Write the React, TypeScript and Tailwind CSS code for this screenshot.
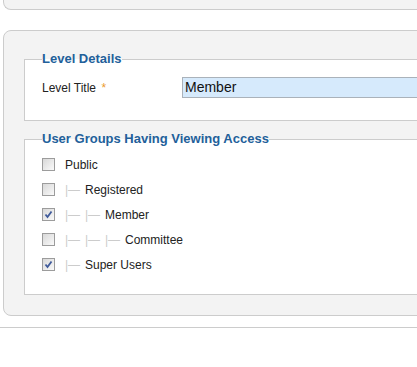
import React from "react";

function Box({ checked }: { checked?: boolean }) {
  return (
    <span className="relative inline-block w-[13px] h-[13px] border border-[#9c9c9c] bg-gradient-to-br from-[#d8d8d8] to-[#fafafa] shrink-0">
      {checked && (
        <svg className="absolute left-[1px] top-[1px]" width="9" height="9" viewBox="0 0 9 9">
          <path d="M1.5 4.5 L3.5 7 L7.5 1.5" fill="none" stroke="#3f5a9a" strokeWidth="1.8" />
        </svg>
      )}
    </span>
  );
}

const rows = [
  { name: "Public", level: 0, checked: false },
  { name: "Registered", level: 1, checked: false },
  { name: "Member", level: 2, checked: true },
  { name: "Committee", level: 3, checked: false },
  { name: "Super Users", level: 1, checked: true },
];

export default function App() {
  return (
    <div className="w-[417px] h-[367px] overflow-hidden bg-white font-['Liberation_Sans',Arial,sans-serif] text-[12px] text-[#222]">
      <div className="ml-[3px] w-[600px] h-[10px] border-l border-b border-[#cccccc] rounded-bl-[8px] bg-[#f3f3f3]" />
      <div className="ml-[3px] mt-[20px] w-[600px] border border-[#cccccc] rounded-[8px] bg-[#f3f3f3] pt-[19px] pl-[20px] pb-[20px]">
        <fieldset className="border border-[#cccccc] bg-white pl-[17px] pb-[22px]">
          <legend className="text-[13px] leading-[18px] font-bold text-[#22609a]">Level Details</legend>
          <div className="mt-[9px] flex items-center">
            <label className="w-[140px]">
              Level Title <span className="text-[#eb9a2e] ml-[2px]">*</span>
            </label>
            <div className="w-[400px] h-[21px] border border-[#aab2ba] bg-[#d6eafc] text-[14px] leading-[19px] pl-[2px] text-[#111]">
              Member
            </div>
          </div>
        </fieldset>
        <fieldset className="mt-[9px] border border-[#cccccc] bg-white pl-[17px] pb-[17px]">
          <legend className="text-[13px] leading-[18px] font-bold text-[#22609a]">User Groups Having Viewing Access</legend>
          <div className="mt-[4px] flex flex-col">
            {rows.map((r) => (
              <div key={r.name} className="h-[25px] flex items-center">
                <Box checked={r.checked} />
                <span className="ml-[10px] flex items-center">
                  {Array.from({ length: r.level }).map((_, i) => (
                    <span key={i} className="w-[20px] text-[#cccccc]">|—</span>
                  ))}
                  <span>{r.name}</span>
                </span>
              </div>
            ))}
          </div>
        </fieldset>
      </div>
      <div className="mt-[11px] h-px bg-[#cccccc]" />
    </div>
  );
}
